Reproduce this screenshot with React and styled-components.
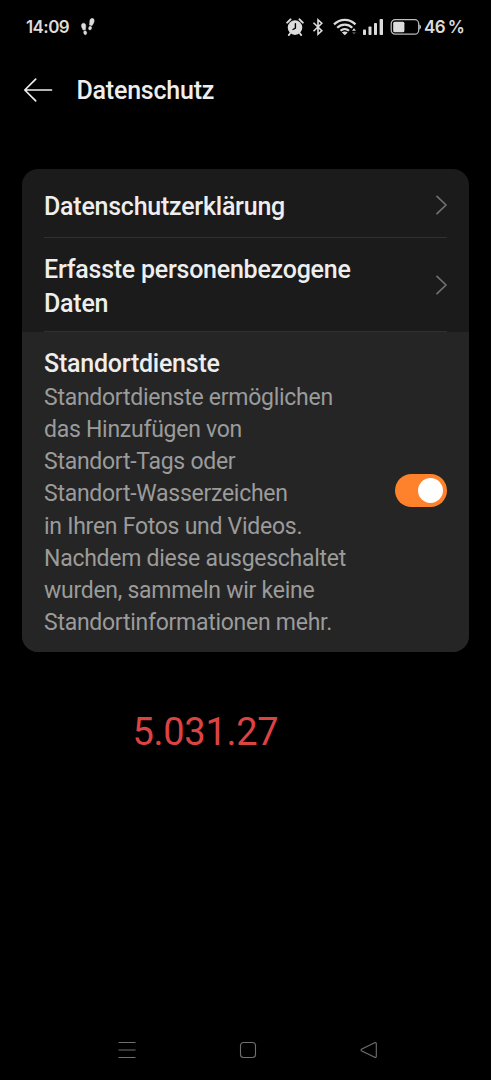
import styled, { createGlobalStyle } from "styled-components";

const GlobalStyle = createGlobalStyle`
  * {
    box-sizing: border-box;
  }

  body {
    margin: 0;
    background: #000;
    font-family: Roboto, sans-serif;
  }
`;

/* SCREEN */
const Screen = styled.div`
  display: flex;
  flex-direction: column;
  height: 1080px;
  background: #000;
  color: #eee;
  overflow: hidden;
`;

/* STATUS BAR */
const StatusBar = styled.div`
  display: flex;
  align-items: center;
  height: 54px;
  padding: 0 27px 0 26px;
  color: #dcdcdc;
  font-family: Inter, sans-serif;
  font-size: 17px;
  font-weight: 600;
  line-height: 20px;

  svg {
    flex: none;
  }
`;

const Clock = styled.span`
  width: 55px;
  letter-spacing: -0.6px;
  white-space: nowrap;
`;

const StatusIcons = styled.div`
  display: flex;
  align-items: center;
  margin-left: auto;
`;

const BatteryLevel = styled.span`
  width: 40px;
  margin-left: 3px;
  letter-spacing: -0.6px;
  word-spacing: -1px;
  white-space: nowrap;
`;

/* HEADER */
const Header = styled.header`
  display: flex;
  align-items: center;
  gap: 23.5px;
  height: 72px;
  padding-left: 23px;
`;

const Title = styled.h1`
  margin: 2px 0 0;
  font-size: 25px;
  font-weight: 500;
  letter-spacing: -0.22px;
  line-height: 34px;
`;

/* SETTINGS CARD */
const Card = styled.main`
  flex: none;
  margin: 43px 22px 0;
  border-radius: 16px;
  background: #1b1b1b;
  overflow: hidden;
`;

const Row = styled.div`
  display: flex;
  align-items: center;
  justify-content: space-between;
  height: ${({ $height }) => $height}px;
  margin: 0 22px;
  padding-top: ${({ $top }) => $top || 0}px;
  border-bottom: 1px solid #303030;
`;

const Label = styled.div`
  width: 320px;
  padding-top: 4px;
  font-size: 25px;
  font-weight: 500;
  letter-spacing: -0.24px;
  line-height: 34px;
`;

const SwitchRow = styled.div`
  display: flex;
  align-items: center;
  justify-content: space-between;
  height: 320px;
  padding: 0 22px 2px;
  background: #252525;
`;

const Description = styled.p`
  margin: 1px 0 0;
  color: #9b9b9b;
  font-size: 23px;
  letter-spacing: -0.27px;
  line-height: 32.1px;
  white-space: nowrap;
`;

const Switch = styled.button`
  display: flex;
  justify-content: flex-end;
  align-items: center;
  width: 52px;
  height: 33px;
  margin-bottom: 2px;
  padding: 0 4px;
  border: 0;
  border-radius: 17px;
  background: #fd822b;
`;

const Knob = styled.span`
  width: 25px;
  height: 25px;
  border-radius: 50%;
  background: #fff;
`;

const Version = styled.div`
  margin: 56px 0 0 132.5px;
  color: #dc4343;
  font-size: 38px;
  letter-spacing: -0.3px;
  line-height: 48px;
`;

/* NAVIGATION BAR */
const NavBar = styled.nav`
  display: flex;
  align-items: center;
  justify-content: space-between;
  height: 60px;
  margin-top: auto;
  padding: 0 112px 0 117px;
`;

const Steps = () => (
  <svg width="14" height="18" viewBox="0 0 14 18" fill="#dcdcdc" stroke="#dcdcdc" strokeWidth=".4">
    <path d="M2.2 5.2C3.9 4.8 5 6.3 4.8 8.2L4.5 11.7L2 12.1C1.4 10.5.4 9.2.4 7.6.4 6.2 1.1 5.4 2.2 5.2Z" />
    <ellipse cx="4.2" cy="14.7" rx="1.5" ry="2" transform="rotate(-12 4.2 14.7)" />
    <path d="M11.4.3C9.7.2 8.7 1.8 8.7 3.7L8.5 7.1L11 7.8C11.8 6.3 13.1 4.8 13.2 3 13.3 1.5 12.6.5 11.4.3Z" />
    <ellipse cx="9.1" cy="10.1" rx="1.5" ry="1.9" transform="rotate(18 9.1 10.1)" />
  </svg>
);

const Alarm = () => (
  <svg width="18" height="18" viewBox="0 0 18 18" fill="none" strokeLinecap="round">
    <path d="M1.2 4.6 4.5 1.4M16.8 4.6 13.5 1.4" stroke="#dcdcdc" strokeWidth="2" />
    <path d="m4 15.5-1.2 1.6M14 15.5l1.2 1.6" stroke="#dcdcdc" strokeWidth="1.8" />
    <circle cx="9" cy="9.6" r="7.3" fill="#dcdcdc" />
    <path d="M9.4 5.8v4.4L7 11.5" stroke="#000" strokeWidth="1.4" />
  </svg>
);

const Bluetooth = () => (
  <svg width="12" height="18" viewBox="0 0 12 18" fill="none" stroke="#dcdcdc" strokeWidth="1.6">
    <path d="m1.5 4.7 8.3 8.1L6 16.2V1.8l3.8 3.4-8.3 8.1" />
  </svg>
);

const Wifi = () => (
  <svg width="24" height="18" viewBox="0 0 24 18" fill="none" stroke="#dcdcdc" strokeWidth="2.2">
    <path d="M1 6.4C7.1.3 16.4.3 22.5 6.4M4.2 9.7c4.4-4.2 10.7-4.2 15.1 0M7.5 12.7c2.5-2.3 6-2.3 8.5 0" />
    <path d="m11.8 17.3-2.9-2.7c1.6-1.5 4.2-1.5 5.8 0z" fill="#dcdcdc" stroke="none" />
    <path d="m19 12.8 2-2.5 2 2.5z" fill="#dcdcdc" stroke="none" />
    <path d="m19 14.3 2 2.3 2-2.3z" fill="#555" stroke="none" />
  </svg>
);

const Signal = () => (
  <svg width="22" height="18" viewBox="0 0 22 18" fill="#dcdcdc">
    <rect x="1" y="11.5" width="3" height="5.5" rx=".8" />
    <rect x="6.5" y="8.5" width="3" height="8.5" rx=".8" />
    <rect x="12" y="5" width="3" height="12" rx=".8" />
    <rect x="17.6" y="1" width="3.4" height="16" rx=".8" />
  </svg>
);

const Battery = () => (
  <svg width="31" height="18" viewBox="0 0 31 18" fill="none">
    <rect x="1.2" y="1.7" width="27.5" height="14.5" rx="4" stroke="#bdbdbd" strokeWidth="1.2" />
    <rect x="3.2" y="3.7" width="11.2" height="10.5" rx="1.5" fill="#dcdcdc" />
    <path d="M29.4 6.5c2 .7 2 4.3 0 5z" fill="#dcdcdc" />
  </svg>
);

const BackArrow = () => (
  <svg width="30" height="26" viewBox="0 0 30 26" fill="none" stroke="#eee" strokeWidth="1.7" strokeLinecap="round" strokeLinejoin="round">
    <path d="M12.7 2.2 1.8 13l10.9 10.8M2 13h26.5" />
  </svg>
);

const Chevron = () => (
  <svg width="12" height="20" viewBox="0 0 12 20" fill="none" stroke="#707070" strokeWidth="1.7" strokeLinecap="round" strokeLinejoin="round">
    <path d="m2 1.3 9 8.7-9 8.7" />
  </svg>
);

const NavIcon = ({ path }) => (
  <svg width="20" height="20" viewBox="0 0 20 20" fill="none" stroke="#707070" strokeWidth="1.1" strokeLinejoin="round">
    <path d={path} />
  </svg>
);

const App = () => {
  return (
    <>
      <GlobalStyle />
      <Screen>
        <StatusBar>
          <Clock>14:09</Clock>
          <Steps />
          <StatusIcons>
            <Alarm />
            <svg width="8" height="1" />
            <Bluetooth />
            <svg width="9" height="1" />
            <Wifi />
            <svg width="5" height="1" />
            <Signal />
            <svg width="6" height="1" />
            <Battery />
            <BatteryLevel>46 %</BatteryLevel>
          </StatusIcons>
        </StatusBar>

        <Header>
          <BackArrow />
          <Title>Datenschutz</Title>
        </Header>

        <Card>
          <Row $height={69} $top={3}>
            <Label>Datenschutzerklärung</Label>
            <Chevron />
          </Row>
          <Row $height={94}>
            <Label>Erfasste personenbezogene Daten</Label>
            <Chevron />
          </Row>
          <SwitchRow>
            <div>
              <Label>Standortdienste</Label>
              <Description>
                Standortdienste ermöglichen<br />
                das Hinzufügen von<br />
                Standort-Tags oder<br />
                Standort-Wasserzeichen<br />
                in Ihren Fotos und Videos.<br />
                Nachdem diese ausgeschaltet<br />
                wurden, sammeln wir keine<br />
                Standortinformationen mehr.
              </Description>
            </div>
            <Switch type="button" role="switch" aria-checked="true" aria-label="Standortdienste">
              <Knob />
            </Switch>
          </SwitchRow>
        </Card>

        <Version>5.031.27</Version>

        <NavBar>
          <NavIcon path="M1.5 2.5h17M1.5 10h17M1.5 17.5h17" />
          <NavIcon path="M5.5 2.5h9a3 3 0 0 1 3 3v9a3 3 0 0 1-3 3h-9a3 3 0 0 1-3-3v-9a3 3 0 0 1 3-3z" />
          <NavIcon path="M2.8 9.1 15.7 2.8q1.6-.7 1.6 1v12.4q0 1.7-1.6 1L2.8 10.9q-1.7-.9 0-1.8z" />
        </NavBar>
      </Screen>
    </>
  );
};

export default App;
